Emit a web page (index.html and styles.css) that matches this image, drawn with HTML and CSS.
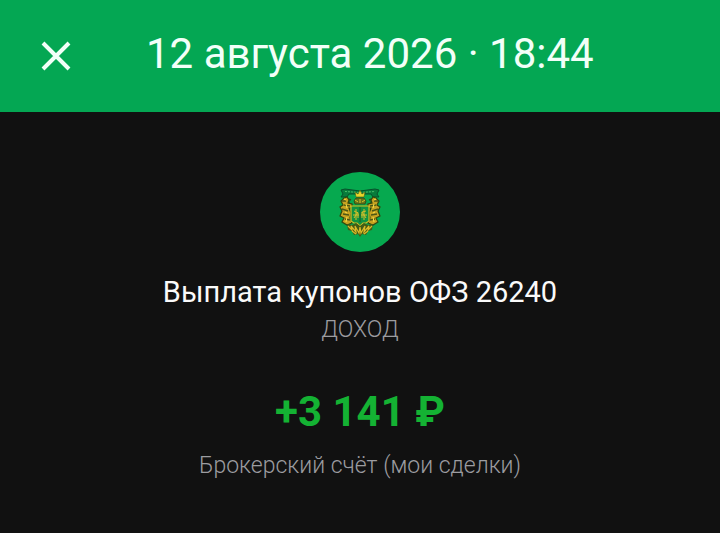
FILE: index.html
```
<!DOCTYPE html>
<html lang="ru">
<head>
    <meta charset="UTF-8">
    <meta name="viewport" content="width=device-width, initial-scale=1.0">
    <title>Выплата купонов ОФЗ 26240</title>
    <link rel="stylesheet" href="styles.css">
</head>
<body>
    <header class="header">
        <button type="button" class="close-btn" aria-label="Закрыть">
            <svg class="close-icon" viewBox="0 0 32 32" aria-hidden="true">
                <path d="M3 3L29 29M29 3L3 29"/>
            </svg>
        </button>
        <h1 class="title">12 августа 2026 · 18:44</h1>
    </header>

    <main class="operation">
        <svg class="logo" viewBox="0 0 80 80" aria-hidden="true">
            <circle cx="40" cy="40" r="40" fill="#06a94f"/>

            <!-- ribbon -->
            <path d="M21 18L25 17L40 19L55 17L59 18L57 22L59 25L53 25L51 22L40 22L29 22L27 25L21 25L23 22Z" fill="#087b3b" stroke="#07512b" stroke-width="1"/>
            <path d="M25 19.500L40 20.500L55 19.500" fill="none" stroke="#47bd69" stroke-width="1" stroke-dasharray="2 1"/>

            <!-- crown -->
            <path d="M36 25L35 20L38 22L40 18L42 22L45 20L44 25Z" fill="#e9d52a" stroke="#4c5a13" stroke-width=".6"/>
            <path d="M34 29L36 26L44 26L46 29L45 32L35 32Z" fill="#64751b" stroke="#33420f" stroke-width=".8"/>
            <path d="M35 28L38 30M45 28L42 30M40 27V31" stroke="#dfbd28" stroke-width="1"/>
            <path d="M31 28L28 27L29 31L32 33M49 28L52 27L51 31L48 33" fill="none" stroke="#354812" stroke-width="1.500"/>

            <!-- supporters -->
            <g id="lion">
                <path d="M24 26L27 25L29 28L28 31L32 32L32 36L29 36L31 41L30 46L32 51L27 53L22 50L24 46L20 44L22 39L20 35L23 33L21 29Z" fill="#c8a321" stroke="#31480f" stroke-width="1.200"/>
                <path d="M22 29L26 29M24 33L30 34M22 37L28 39M23 42L29 43M25 47L30 48" stroke="#4d5715" stroke-width="1.500"/>
                <path d="M24 27L26 28M26 32L27 36M25 40L27 41M27 45L26 50" stroke="#fae047" stroke-width="1"/>
            </g>
            <use href="#lion" transform="matrix(-1 0 0 1 80 0)"/>

            <!-- shield -->
            <path d="M31 34H49V49L46 51H43L40 54L37 51H34L31 49Z" fill="#109341" stroke="#d6bd23" stroke-width="1.200"/>
            <path d="M36 37V48M34 39L38 41L38 46M34 46L38 40M33 43H39M44 37V48M42 46V40L46 39M42 40L46 46M41 43H47" fill="none" stroke="#d4bf2a" stroke-width="1"/>
            <path d="M40 35V50" stroke="#175a24" stroke-width="1"/>

            <!-- foliage -->
            <path d="M27 52L32 53L36 51L40 54L44 51L48 53L53 52L52 58L48 59L46 63L42 62L40 65L38 62L34 63L32 59L28 58Z" fill="#435c15"/>
            <path d="M28 54L32 58L31 54L36 60L35 54L39 61L40 55L41 61L45 54L44 60L49 54L48 58L52 54M32 59L36 62M48 59L44 62" fill="none" stroke="#dcba28" stroke-width="1.200"/>
        </svg>

        <h2 class="name">Выплата купонов ОФЗ 26240</h2>
        <p class="kind">ДОХОД</p>
        <p class="amount">+3 141 ₽</p>
        <p class="account">Брокерский счёт (мои сделки)</p>
    </main>
</body>
</html>
```
FILE: styles.css
```
* {
    margin: 0;
    padding: 0;
    box-sizing: border-box;
}

body {
    min-height: 100vh;
    font-family: Roboto, "Noto Sans", sans-serif;
    font-weight: 400;
    background: #111111;
    color: #fafafa;
}

.header {
    display: flex;
    align-items: center;
    gap: 74px;
    height: 112px;
    padding: 0 40px;
    background: #04a753;
}

.close-btn {
    width: 32px;
    height: 32px;
    border: none;
    background: none;
    cursor: pointer;
}

.close-icon {
    display: block;
    width: 32px;
    height: 32px;
    fill: none;
    stroke: #f2fff8;
    stroke-width: 4;
}

.title {
    padding-bottom: 4px;
    font-size: 42px;
    line-height: 48px;
    font-weight: 400;
    color: #f2fff8;
    white-space: nowrap;
}

.operation {
    display: flex;
    flex-direction: column;
    align-items: center;
    padding: 60px 24px 48px;
    text-align: center;
}

.logo {
    width: 80px;
    height: 80px;
    margin-bottom: 20px;
}

.name {
    font-size: 29px;
    line-height: 40px;
    font-weight: 400;
}

.kind {
    font-size: 23px;
    line-height: 36px;
    font-weight: 300;
    color: #9c9ca0;
}

.amount {
    margin-top: 36px;
    font-size: 42px;
    line-height: 56px;
    font-weight: 700;
    color: #14b233;
}

.account {
    margin-top: 8px;
    font-size: 23px;
    line-height: 36px;
    font-weight: 300;
    color: #9c9ca0;
}
```
